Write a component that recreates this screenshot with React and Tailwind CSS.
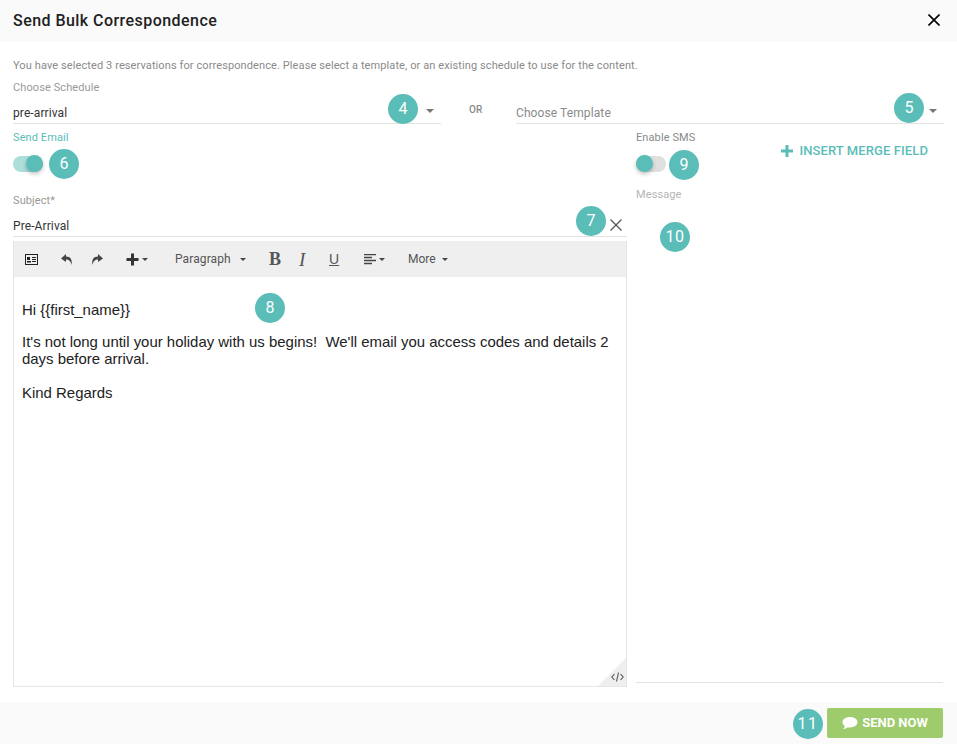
import React from 'react'

const Badge = ({ n, className }) => (
  <span className={`absolute flex items-center justify-center w-[30px] h-[30px] rounded-full bg-[#5bbdb8] text-white text-[16px] ${className}`}>
    {n}
  </span>
)

const Caret = () => (
  <span className="self-center inline-block w-0 h-0 border-x-[4px] border-x-transparent border-t-[4px] border-t-[#777]" />
)

const SmallCaret = ({ className = '' }) => (
  <span className={`inline-block w-0 h-0 border-x-[3px] border-x-transparent border-t-[3px] border-t-[#444] ${className}`} />
)

const Close = ({ className = '', color, width }) => (
  <svg className={className} viewBox="0 0 12 12">
    <path d="M0.5 0.5 L11.5 11.5 M11.5 0.5 L0.5 11.5" stroke={color} strokeWidth={width} fill="none" />
  </svg>
)

const Toggle = ({ on }) => (
  <div className={`relative w-[30px] h-[16px] rounded-full ${on ? 'bg-[#acdeda]' : 'bg-[#e0e0e0]'}`}>
    <span className={`absolute top-[-1px] w-[17px] h-[17px] rounded-full bg-[#5bbdb8] shadow-[0_2px_4px_rgba(0,0,0,0.25)] ${on ? 'right-0' : 'left-0'}`} />
  </div>
)

const Toolbar = () => (
  <div className="flex items-center h-[36px] bg-[#efefef] text-[#444] text-[12px] shrink-0">
    <svg className="ml-[11px] w-[13px] h-[11px] shrink-0" viewBox="0 0 13 11">
      <rect x="0.5" y="0.5" width="12" height="10" fill="none" stroke="#222" />
      <rect x="2" y="3" width="3" height="3" fill="#222" />
      <rect x="2" y="7" width="4" height="1.5" fill="#222" />
      <rect x="7" y="3" width="4" height="1" fill="#222" />
      <rect x="7" y="5" width="4" height="1" fill="#222" />
      <rect x="7" y="7" width="4" height="1" fill="#222" />
    </svg>
    <svg className="ml-[23px] w-[12px] h-[11px] shrink-0" viewBox="0 0 12 11">
      <path d="M5 0 L0 4.5 L5 8 V5.6 C8 5.6 9.5 7 10.5 11 C11.5 6 9.5 2.6 5 2.6 Z" fill="#444" />
    </svg>
    <svg className="ml-[18px] w-[12px] h-[11px] shrink-0" viewBox="0 0 12 11">
      <path d="M7 0 L12 4.5 L7 8 V5.6 C4 5.6 2.5 7 1.5 11 C0.5 6 2.5 2.6 7 2.6 Z" fill="#444" />
    </svg>
    <svg className="ml-[23px] w-[13px] h-[13px] shrink-0" viewBox="0 0 13 13">
      <path d="M5 0.5 H8 V5 H12.5 V8 H8 V12.5 H5 V8 H0.5 V5 H5 Z" fill="#333" />
    </svg>
    <SmallCaret className="ml-[3px]" />
    <span className="ml-[27px] w-[56px] tracking-[0.1px] text-[#555]">Paragraph</span>
    <SmallCaret className="ml-[9px]" />
    <span className="ml-[23px] w-[12px] text-[18px] leading-none font-bold font-['Liberation_Serif',serif] text-[#555]">B</span>
    <span className="ml-[18px] w-[11px] text-[19px] leading-none italic font-['Liberation_Serif',serif] text-[#555]">I</span>
    <span className="ml-[19px] w-[11px] text-[14px] leading-none underline font-['Liberation_Sans',sans-serif] text-[#555]">U</span>
    <svg className="ml-[24px] w-[12px] h-[11px] shrink-0" viewBox="0 0 12 11">
      <path d="M0 0.5 H12 M0 3.5 H8 M0 6.5 H12 M0 9.5 H8" stroke="#444" strokeWidth="1.3" fill="none" />
    </svg>
    <SmallCaret className="ml-[3px]" />
    <span className="ml-[23px] w-[28px] text-[#555]">More</span>
    <SmallCaret className="ml-[6px]" />
  </div>
)

export default function App() {
  return (
    <div className="relative flex flex-col w-[957px] h-[744px] bg-white font-['Roboto',sans-serif] overflow-hidden">
      {/* Header */}
      <div className="flex items-center justify-between h-[42px] pl-[13px] pr-[17px] bg-[#fafafa] shrink-0">
        <h1 className="text-[16px] font-medium text-[#212121] tracking-[0.45px]">Send Bulk Correspondence</h1>
        <Close className="w-[12px] h-[12px] mb-[3px]" color="#000" width={1.6} />
      </div>

      {/* Body */}
      <div className="flex flex-col flex-1 min-h-0 px-[13px] pt-[17px]">
        <p className="text-[11px] leading-[13px] text-[#8a8a8a] tracking-[0.1px]">
          You have selected 3 reservations for correspondence. Please select a template, or an existing schedule to use for the content.
        </p>

        <div className="flex items-start mt-[9px]">
          <div className="w-[428px]">
            <div className="text-[11px] leading-[13px] tracking-[0.1px] text-[#9a9a9a]">Choose Schedule</div>
            <div className="flex items-end justify-between h-[25px] mt-[5px] pr-[7px] border-b border-[#e2e2e2] text-[12px] tracking-[0.1px] text-[#333]">
              <span className="leading-[16px] pb-[2px]">pre-arrival</span>
              <Caret />
            </div>
          </div>
          <div className="w-[75px] pt-[21px] pl-[28px] text-[10px] font-medium tracking-[0.1px] text-[#8a8a8a]">OR</div>
          <div className="flex items-end justify-between w-[428px] h-[25px] mt-[18px] pr-[7px] border-b border-[#e2e2e2] text-[12px] tracking-[0.1px] text-[#8a8a8a]">
            <span className="leading-[16px] pb-[2px]">Choose Template</span>
            <Caret />
          </div>
        </div>

        <div className="flex flex-1 min-h-0 mt-[7px]">
          {/* Email column */}
          <div className="flex flex-col w-[614px] shrink-0">
            <div className="text-[11px] leading-[13px] tracking-[0.1px] text-[#5bbdb8]">Send Email</div>
            <div className="mt-[12px] h-[16px]"><Toggle on /></div>
            <div className="mt-[22px] text-[11px] leading-[13px] tracking-[0.1px] text-[#9a9a9a]">Subject*</div>
            <div className="flex items-end justify-between h-[25px] mt-[5px] pr-[5px] border-b border-[#e2e2e2] text-[12px] tracking-[0.1px] text-[#333]">
              <span className="leading-[16px] pb-[2px]">Pre-Arrival</span>
              <Close className="w-[12px] h-[12px] mb-[5px]" color="#555" width={1.3} />
            </div>
            <div className="relative flex flex-col flex-1 min-h-0 mt-[4px] mb-[15px] border-x border-b border-[#e6e6e6]">
              <Toolbar />
              <div className="flex-1 px-[8px] pt-[24px] font-['Liberation_Sans',sans-serif] text-[14.95px] leading-[17px] text-[#222]">
                <p>Hi {'{{first_name}}'}</p>
                <p className="mt-[15px]">It's not long until your holiday with us begins!&nbsp; We'll email you access codes and details 2 days before arrival.</p>
                <p className="mt-[17px]">Kind Regards</p>
              </div>
              <div className="absolute right-0 bottom-0 w-[28px] h-[28px] bg-[#efefef] [clip-path:polygon(100%_0,100%_100%,0_100%)]" />
              <svg className="absolute right-[2px] bottom-[4px] w-[13px] h-[10px]" viewBox="0 0 13 10">
                <path d="M3.5 2 L0.8 5 L3.5 8 M9.5 2 L12.2 5 L9.5 8 M7.5 0.5 L5.5 9.5" stroke="#555" strokeWidth="1.1" fill="none" />
              </svg>
            </div>
          </div>

          {/* SMS column */}
          <div className="relative flex flex-col w-[307px] ml-[9px] mb-[19px] border-b border-[#e2e2e2]">
            <div className="text-[11px] leading-[13px] tracking-[0.1px] text-[#8a8a8a]">Enable SMS</div>
            <div className="mt-[12px] h-[16px]"><Toggle /></div>
            <div className="mt-[16px] text-[11px] leading-[13px] tracking-[0.1px] text-[#b5b5b5]">Message</div>
            <div className="absolute top-[12px] right-[15px] flex items-center gap-[6px] text-[13px] font-medium tracking-[0.1px] text-[#5bbdb8] leading-[16px]">
              <svg className="w-[12px] h-[12px]" viewBox="0 0 12 12">
                <path d="M4.5 0 H7.5 V4.5 H12 V7.5 H7.5 V12 H4.5 V7.5 H0 V4.5 H4.5 Z" fill="#5bbdb8" />
              </svg>
              INSERT MERGE FIELD
            </div>
          </div>
        </div>
      </div>

      {/* Footer */}
      <div className="flex items-center justify-end h-[42px] pr-[14px] bg-[#fafafa] shrink-0">
        <button className="flex items-center justify-center gap-[4px] w-[116px] h-[30px] rounded-[2px] bg-[#9ecb6c] text-white text-[13px] font-bold">
          <svg className="w-[16px] h-[14px]" viewBox="0 0 16 14">
            <path d="M8 1 C12 1 15.5 3.2 15.5 6.2 C15.5 9.2 12 11.4 8 11.4 C7.2 11.4 6.5 11.3 5.8 11.2 C4.5 12.4 2.8 13 1 13 C2 12.2 2.7 11 2.8 9.9 C1.2 9 0.5 7.7 0.5 6.2 C0.5 3.2 4 1 8 1 Z" fill="white" />
          </svg>
          SEND NOW
        </button>
      </div>

      {/* Callout badges */}
      <Badge n="4" className="left-[388px] top-[94px]" />
      <Badge n="5" className="left-[894px] top-[93px]" />
      <Badge n="6" className="left-[49px] top-[149px]" />
      <Badge n="7" className="left-[576px] top-[206px]" />
      <Badge n="8" className="left-[255px] top-[293px]" />
      <Badge n="9" className="left-[669px] top-[150px]" />
      <Badge n="10" className="left-[660px] top-[222px] tracking-[0.5px]" />
      <Badge n="11" className="left-[793px] top-[709px] tracking-[1.5px]" />
    </div>
  )
}
